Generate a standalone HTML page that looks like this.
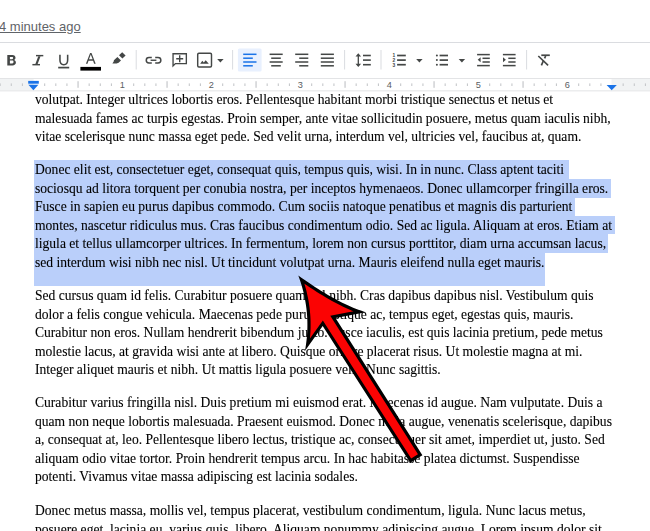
<!DOCTYPE html>
<html><head><meta charset="utf-8">
<style>
html,body{margin:0;padding:0;}
body{width:650px;height:531px;overflow:hidden;position:relative;background:#fff;font-family:"Liberation Sans",sans-serif;}
.abs{position:absolute;}
#ago{left:-1px;top:18.5px;font-size:13px;line-height:16px;color:#5f6368;text-decoration:underline;white-space:nowrap;}
.doc{position:absolute;left:34.5px;font-family:"Liberation Serif",serif;font-size:13.59px;color:#000;white-space:nowrap;line-height:18.5px;will-change:transform;-webkit-text-stroke:0.1px #000;}
.hl{position:absolute;background:#bacffa;}
svg{position:absolute;left:0;top:0;}
</style></head><body>
<div id="ago" class="abs">4 minutes ago</div>
<svg width="650" height="531" viewBox="0 0 650 531">
<rect x="0" y="42" width="650" height="1" fill="#dadce0"/>
<rect x="0" y="78" width="650" height="12.5" fill="#f1f3f4"/>
<rect x="0" y="78" width="650" height="1" fill="#e3e4e6"/>
<rect x="33.6" y="79" width="577.9" height="11.3" fill="#fff"/>
<rect x="0" y="90.3" width="650" height="1.1" fill="#e6e7e9"/>
<rect x="-0.37" y="83.4" width="1.1" height="2.6" fill="#c6c8cb"/><rect x="10.75" y="83.4" width="1.1" height="2.6" fill="#c6c8cb"/><rect x="21.88" y="83.4" width="1.1" height="2.6" fill="#c6c8cb"/><rect x="44.12" y="83.4" width="1.1" height="2.6" fill="#c6c8cb"/><rect x="55.25" y="83.4" width="1.1" height="2.6" fill="#c6c8cb"/><rect x="66.38" y="83.4" width="1.1" height="2.6" fill="#c6c8cb"/><rect x="77.50" y="81.2" width="1.1" height="6.6" fill="#c0c2c5"/><rect x="88.62" y="83.4" width="1.1" height="2.6" fill="#c6c8cb"/><rect x="99.75" y="83.4" width="1.1" height="2.6" fill="#c6c8cb"/><rect x="110.88" y="83.4" width="1.1" height="2.6" fill="#c6c8cb"/><rect x="133.12" y="83.4" width="1.1" height="2.6" fill="#c6c8cb"/><rect x="144.25" y="83.4" width="1.1" height="2.6" fill="#c6c8cb"/><rect x="155.38" y="83.4" width="1.1" height="2.6" fill="#c6c8cb"/><rect x="166.50" y="81.2" width="1.1" height="6.6" fill="#c0c2c5"/><rect x="177.62" y="83.4" width="1.1" height="2.6" fill="#c6c8cb"/><rect x="188.75" y="83.4" width="1.1" height="2.6" fill="#c6c8cb"/><rect x="199.88" y="83.4" width="1.1" height="2.6" fill="#c6c8cb"/><rect x="222.12" y="83.4" width="1.1" height="2.6" fill="#c6c8cb"/><rect x="233.25" y="83.4" width="1.1" height="2.6" fill="#c6c8cb"/><rect x="244.38" y="83.4" width="1.1" height="2.6" fill="#c6c8cb"/><rect x="255.50" y="81.2" width="1.1" height="6.6" fill="#c0c2c5"/><rect x="266.62" y="83.4" width="1.1" height="2.6" fill="#c6c8cb"/><rect x="277.75" y="83.4" width="1.1" height="2.6" fill="#c6c8cb"/><rect x="288.88" y="83.4" width="1.1" height="2.6" fill="#c6c8cb"/><rect x="311.12" y="83.4" width="1.1" height="2.6" fill="#c6c8cb"/><rect x="322.25" y="83.4" width="1.1" height="2.6" fill="#c6c8cb"/><rect x="333.38" y="83.4" width="1.1" height="2.6" fill="#c6c8cb"/><rect x="344.50" y="81.2" width="1.1" height="6.6" fill="#c0c2c5"/><rect x="355.62" y="83.4" width="1.1" height="2.6" fill="#c6c8cb"/><rect x="366.75" y="83.4" width="1.1" height="2.6" fill="#c6c8cb"/><rect x="377.88" y="83.4" width="1.1" height="2.6" fill="#c6c8cb"/><rect x="400.12" y="83.4" width="1.1" height="2.6" fill="#c6c8cb"/><rect x="411.25" y="83.4" width="1.1" height="2.6" fill="#c6c8cb"/><rect x="422.38" y="83.4" width="1.1" height="2.6" fill="#c6c8cb"/><rect x="433.50" y="81.2" width="1.1" height="6.6" fill="#c0c2c5"/><rect x="444.62" y="83.4" width="1.1" height="2.6" fill="#c6c8cb"/><rect x="455.75" y="83.4" width="1.1" height="2.6" fill="#c6c8cb"/><rect x="466.88" y="83.4" width="1.1" height="2.6" fill="#c6c8cb"/><rect x="489.12" y="83.4" width="1.1" height="2.6" fill="#c6c8cb"/><rect x="500.25" y="83.4" width="1.1" height="2.6" fill="#c6c8cb"/><rect x="511.38" y="83.4" width="1.1" height="2.6" fill="#c6c8cb"/><rect x="522.50" y="81.2" width="1.1" height="6.6" fill="#c0c2c5"/><rect x="533.62" y="83.4" width="1.1" height="2.6" fill="#c6c8cb"/><rect x="544.75" y="83.4" width="1.1" height="2.6" fill="#c6c8cb"/><rect x="555.88" y="83.4" width="1.1" height="2.6" fill="#c6c8cb"/><rect x="578.12" y="83.4" width="1.1" height="2.6" fill="#c6c8cb"/><rect x="589.25" y="83.4" width="1.1" height="2.6" fill="#c6c8cb"/><rect x="600.38" y="83.4" width="1.1" height="2.6" fill="#c6c8cb"/><rect x="622.62" y="83.4" width="1.1" height="2.6" fill="#c6c8cb"/><rect x="633.75" y="83.4" width="1.1" height="2.6" fill="#c6c8cb"/><rect x="644.88" y="83.4" width="1.1" height="2.6" fill="#c6c8cb"/>
<g font-family="Liberation Sans" font-size="9.2" fill="#5a5e63"><text x="122.30" y="87.8" text-anchor="middle">1</text><text x="211.30" y="87.8" text-anchor="middle">2</text><text x="300.30" y="87.8" text-anchor="middle">3</text><text x="389.30" y="87.8" text-anchor="middle">4</text><text x="478.30" y="87.8" text-anchor="middle">5</text><text x="567.30" y="87.8" text-anchor="middle">6</text></g>
<rect x="28.2" y="80.9" width="10.6" height="2.8" fill="#1a73e8"/>
<path d="M28.4 84.7 H38.4 L33.4 90.3 Z" fill="#1a73e8"/>
<path d="M606.6 85 H616.8 L611.7 90.3 Z" fill="#1a73e8"/>
<path fill-rule="evenodd" fill="#444746" d="M7.3 55 H12.3 C14.5 55 15.5 56.3 15.5 57.8 C15.5 58.8 15 59.5 14.2 59.9 C15.3 60.3 15.9 61.3 15.9 62.5 C15.9 64.3 14.6 65.4 12.5 65.4 H7.3 Z M9.9 57.1 H12.1 C12.8 57.1 13.1 57.5 13.1 58.1 C13.1 58.7 12.8 59.2 12.1 59.2 H9.9 Z M9.9 60.6 H12.3 C13.1 60.6 13.5 61.1 13.5 62 C13.5 62.9 13.1 63.4 12.3 63.4 H9.9 Z"/>
<rect x="36" y="54.9" width="7.3" height="1.45" fill="#444746"/><rect x="32.4" y="63.95" width="7.6" height="1.45" fill="#444746"/><path d="M38.3 56.3 H40.5 L37.6 64 H35.4 Z" fill="#444746"/>
<path d="M59.95 54.7 V60 C59.95 63.2 61.7 64.65 63.8 64.65 C65.9 64.65 67.65 63.2 67.65 60 V54.7" fill="none" stroke="#444746" stroke-width="1.55"/>
<rect x="58.20" y="66.75" width="11.00" height="1.7" fill="#444746"/>
<path fill-rule="evenodd" fill="#444746" d="M85.9 63.7 L90.1 52.9 H91.5 L95.7 63.7 H94.1 L93.1 60.8 H88.5 L87.5 63.7 Z M89.0 59.3 H92.6 L90.8 54.5 Z"/>
<rect x="80.4" y="66.9" width="20.6" height="3.7" fill="#000"/>
<path d="M122.2 52.2 L125.6 55.4 L122.4 58.6 L119 55.3 Z" fill="#444746"/>
<path d="M117.4 56.9 L121 60.4 L118.6 62.8 L116.6 63.6 L112.4 63.6 L113.7 61.6 L113.9 60.3 Z" fill="#444746"/>
<rect x="135.7" y="50" width="1" height="19.5" fill="#dadce0"/>
<rect x="232.1" y="50" width="1" height="19.5" fill="#dadce0"/>
<rect x="344.1" y="50" width="1" height="19.5" fill="#dadce0"/>
<rect x="380.5" y="50" width="1" height="19.5" fill="#dadce0"/>
<rect x="526.1" y="50" width="1" height="19.5" fill="#dadce0"/>
<path d="M151.8 57.55 H149 C147.1 57.55 146.25 58.9 146.25 60.25 C146.25 61.6 147.1 62.95 149 62.95 H151.8 M155.2 57.55 H158 C159.9 57.55 160.85 58.9 160.85 60.25 C160.85 61.6 159.9 62.95 158 62.95 H155.2" fill="none" stroke="#444746" stroke-width="1.5"/>
<rect x="150.60" y="59.55" width="5.80" height="1.4" fill="#444746"/>
<path d="M173.05 65.9 V53.75 H186.35 V63.55 H175.4 Z" fill="none" stroke="#444746" stroke-width="1.35" stroke-linejoin="miter"/>
<path d="M176.2 58.8 H183.2 M179.7 55.3 V62.3" fill="none" stroke="#444746" stroke-width="1.4"/>
<rect x="197.7" y="53.2" width="13.8" height="13.8" rx="1.2" fill="none" stroke="#444746" stroke-width="1.45"/>
<path d="M200.2 63.7 L202.3 60.8 L203.8 62.6 L205.7 60.2 L208.8 63.7 Z" fill="#444746"/>
<path d="M217.2 59.1 H223.6 L220.39999999999998 62.5 Z" fill="#444746"/>
<path d="M416.2 59.1 H422.59999999999997 L419.4 62.5 Z" fill="#444746"/>
<path d="M458.7 59.1 H465.09999999999997 L461.9 62.5 Z" fill="#444746"/>
<rect x="237.9" y="48.4" width="23.7" height="23.2" rx="1.5" fill="#e8f0fe"/>
<rect x="243.20" y="53.55" width="13.30" height="1.5" fill="#1a73e8"/>
<rect x="269.60" y="53.55" width="13.10" height="1.5" fill="#444746"/>
<rect x="295.20" y="53.55" width="13.10" height="1.5" fill="#444746"/>
<rect x="320.80" y="53.55" width="13.10" height="1.5" fill="#444746"/>
<rect x="243.20" y="57.45" width="9.60" height="1.5" fill="#1a73e8"/>
<rect x="271.20" y="57.45" width="9.60" height="1.5" fill="#444746"/>
<rect x="299.20" y="57.45" width="9.10" height="1.5" fill="#444746"/>
<rect x="320.80" y="57.45" width="13.10" height="1.5" fill="#444746"/>
<rect x="243.20" y="61.25" width="13.30" height="1.5" fill="#1a73e8"/>
<rect x="269.60" y="61.25" width="13.10" height="1.5" fill="#444746"/>
<rect x="295.20" y="61.25" width="13.10" height="1.5" fill="#444746"/>
<rect x="320.80" y="61.25" width="13.10" height="1.5" fill="#444746"/>
<rect x="243.20" y="65.05" width="9.60" height="1.5" fill="#1a73e8"/>
<rect x="271.20" y="65.05" width="9.60" height="1.5" fill="#444746"/>
<rect x="299.20" y="65.05" width="9.10" height="1.5" fill="#444746"/>
<rect x="320.80" y="65.05" width="13.10" height="1.5" fill="#444746"/>
<rect x="357.65" y="55.5" width="1.3" height="10" fill="#444746"/>
<path d="M355.5 56.5 L358.3 53.3 L361.1 56.5 Z M355.5 63.8 L358.3 66.9 L361.1 63.8 Z" fill="#444746"/>
<rect x="363.00" y="54.70" width="7.80" height="1.6" fill="#444746"/>
<rect x="397.10" y="54.65" width="8.70" height="1.7" fill="#444746"/>
<rect x="439.60" y="54.65" width="8.40" height="1.7" fill="#444746"/>
<circle cx="436.9" cy="55.5" r="1.0" fill="#444746"/>
<rect x="363.00" y="59.30" width="7.80" height="1.6" fill="#444746"/>
<rect x="397.10" y="59.25" width="8.70" height="1.7" fill="#444746"/>
<rect x="439.60" y="59.25" width="8.40" height="1.7" fill="#444746"/>
<circle cx="436.9" cy="60.1" r="1.0" fill="#444746"/>
<rect x="363.00" y="63.90" width="7.80" height="1.6" fill="#444746"/>
<rect x="397.10" y="63.85" width="8.70" height="1.7" fill="#444746"/>
<rect x="439.60" y="63.85" width="8.40" height="1.7" fill="#444746"/>
<circle cx="436.9" cy="64.7" r="1.0" fill="#444746"/>
<g font-family="Liberation Sans" font-weight="bold" font-size="4.9" fill="#444746" text-anchor="middle"><text x="393.8" y="56.7">1</text><text x="393.8" y="61.6">2</text><text x="393.8" y="66.6">3</text></g>
<rect x="477.10" y="53.85" width="12.70" height="1.5" fill="#444746"/>
<rect x="477.10" y="64.85" width="12.70" height="1.5" fill="#444746"/>
<rect x="482.50" y="57.55" width="7.30" height="1.5" fill="#444746"/>
<rect x="482.50" y="61.25" width="7.30" height="1.5" fill="#444746"/>
<path d="M480.6 57.3 L477.7 59.8 L480.6 62.2 Z" fill="#444746"/>
<rect x="502.90" y="53.85" width="12.70" height="1.5" fill="#444746"/>
<rect x="502.90" y="64.85" width="12.70" height="1.5" fill="#444746"/>
<rect x="508.30" y="57.55" width="7.30" height="1.5" fill="#444746"/>
<rect x="508.30" y="61.25" width="7.30" height="1.5" fill="#444746"/>
<path d="M503.0 57.3 L505.9 59.8 L503.0 62.2 Z" fill="#444746"/>
<path d="M538.3 56.0 L548.1 65.4" stroke="#444746" stroke-width="1.6" fill="none"/>
<rect x="541.30" y="54.40" width="8.50" height="1.7" fill="#444746"/>
<path d="M545.6 56 L544.6 58.4 M543.5 60.5 L541.4 65.3" stroke="#444746" stroke-width="1.7" fill="none"/>
</svg>
<div class="hl" style="left:34px;top:160px;width:534.6px;height:19px"></div>
<div class="hl" style="left:34px;top:179px;width:577.2px;height:19px"></div>
<div class="hl" style="left:34px;top:198px;width:541.4px;height:18px"></div>
<div class="hl" style="left:34px;top:216px;width:581.4px;height:18px"></div>
<div class="hl" style="left:34px;top:234px;width:574px;height:19px"></div>
<div class="hl" style="left:34px;top:253px;width:510.5px;height:32.6px"></div>
<div class="doc" style="top:91.1px">volutpat. Integer ultrices lobortis eros. Pellentesque habitant morbi tristique senectus et netus et<br>
malesuada fames ac turpis egestas. Proin semper, ante vitae sollicitudin posuere, metus quam iaculis nibh,<br>
vitae scelerisque nunc massa eget pede. Sed velit urna, interdum vel, ultricies vel, faucibus at, quam.</div>
<div class="doc" style="top:161.3px">Donec elit est, consectetuer eget, consequat quis, tempus quis, wisi. In in nunc. Class aptent taciti<br>
sociosqu ad litora torquent per conubia nostra, per inceptos hymenaeos. Donec ullamcorper fringilla eros.<br>
Fusce in sapien eu purus dapibus commodo. Cum sociis natoque penatibus et magnis dis parturient<br>
montes, nascetur ridiculus mus. Cras faucibus condimentum odio. Sed ac ligula. Aliquam at eros. Etiam at<br>
ligula et tellus ullamcorper ultrices. In fermentum, lorem non cursus porttitor, diam urna accumsan lacus,<br>
sed interdum wisi nibh nec nisl. Ut tincidunt volutpat urna. Mauris eleifend nulla eget mauris.</div>
<div class="doc" style="top:287.4px">Sed cursus quam id felis. Curabitur posuere quam vel nibh. Cras dapibus dapibus nisl. Vestibulum quis<br>
dolor a felis congue vehicula. Maecenas pede purus, tristique ac, tempus eget, egestas quis, mauris.<br>
Curabitur non eros. Nullam hendrerit bibendum justo. Fusce iaculis, est quis lacinia pretium, pede metus<br>
molestie lacus, at gravida wisi ante at libero. Quisque ornare placerat risus. Ut molestie magna at mi.<br>
Integer aliquet mauris et nibh. Ut mattis ligula posuere velit. Nunc sagittis.</div>
<div class="doc" style="top:394.0px">Curabitur varius fringilla nisl. Duis pretium mi euismod erat. Maecenas id augue. Nam vulputate. Duis a<br>
quam non neque lobortis malesuada. Praesent euismod. Donec nulla augue, venenatis scelerisque, dapibus<br>
a, consequat at, leo. Pellentesque libero lectus, tristique ac, consectetuer sit amet, imperdiet ut, justo. Sed<br>
aliquam odio vitae tortor. Proin hendrerit tempus arcu. In hac habitasse platea dictumst. Suspendisse<br>
potenti. Vivamus vitae massa adipiscing est lacinia sodales.</div>
<div class="doc" style="top:502.3px">Donec metus massa, mollis vel, tempus placerat, vestibulum condimentum, ligula. Nunc lacus metus,<br>
posuere eget, lacinia eu, varius quis, libero. Aliquam nonummy adipiscing augue. Lorem ipsum dolor sit</div>
<svg width="650" height="531" viewBox="0 0 650 531">
<path d="M298.30 275.50 L301.73 277.94 L305.11 280.30 L308.45 282.59 L311.75 284.80 L315.00 286.93 L318.20 288.99 L321.36 290.97 L324.48 292.87 L327.55 294.70 L330.57 296.45 L333.55 298.12 L336.49 299.71 L339.38 301.23 L342.22 302.67 L345.02 304.04 L347.78 305.33 L350.49 306.54 L353.15 307.68 L355.77 308.73 L358.35 309.72 L360.88 310.62 L363.36 311.45 L365.80 312.20 L335.50 317.95 L422.40 455.15 L410.20 462.80 L322.70 326.10 L304.90 351.00 L305.49 347.70 L306.01 344.40 L306.44 341.10 L306.80 337.80 L307.07 334.50 L307.27 331.21 L307.38 327.92 L307.41 324.63 L307.37 321.34 L307.24 318.05 L307.03 314.77 L306.75 311.48 L306.38 308.20 L305.93 304.92 L305.40 301.65 L304.80 298.37 L304.11 295.10 L303.34 291.83 L302.49 288.56 L301.57 285.29 L300.56 282.03 L299.47 278.76 L298.30 275.50Z" fill="#000"/><path d="M304.43 283.71 L304.63 284.38 L305.58 287.72 L306.45 291.06 L307.23 294.40 L307.94 297.75 L308.56 301.10 L309.10 304.45 L309.56 307.81 L309.93 311.17 L310.22 314.53 L310.44 317.89 L310.57 321.25 L310.61 324.62 L310.58 327.99 L310.46 331.36 L310.26 334.73 L309.98 338.10 L309.95 338.44 L322.85 320.39 L411.19 458.40 L417.98 454.15 L330.28 315.68 L353.52 311.27 L351.92 310.63 L349.21 309.47 L346.44 308.24 L343.64 306.93 L340.80 305.54 L337.91 304.08 L334.98 302.54 L332.00 300.92 L328.99 299.23 L325.93 297.46 L322.83 295.61 L319.68 293.69 L316.49 291.69 L313.26 289.62 L309.98 287.47 L306.66 285.24 L304.43 283.71Z" fill="#fb0303"/>
</svg>
</body></html>
